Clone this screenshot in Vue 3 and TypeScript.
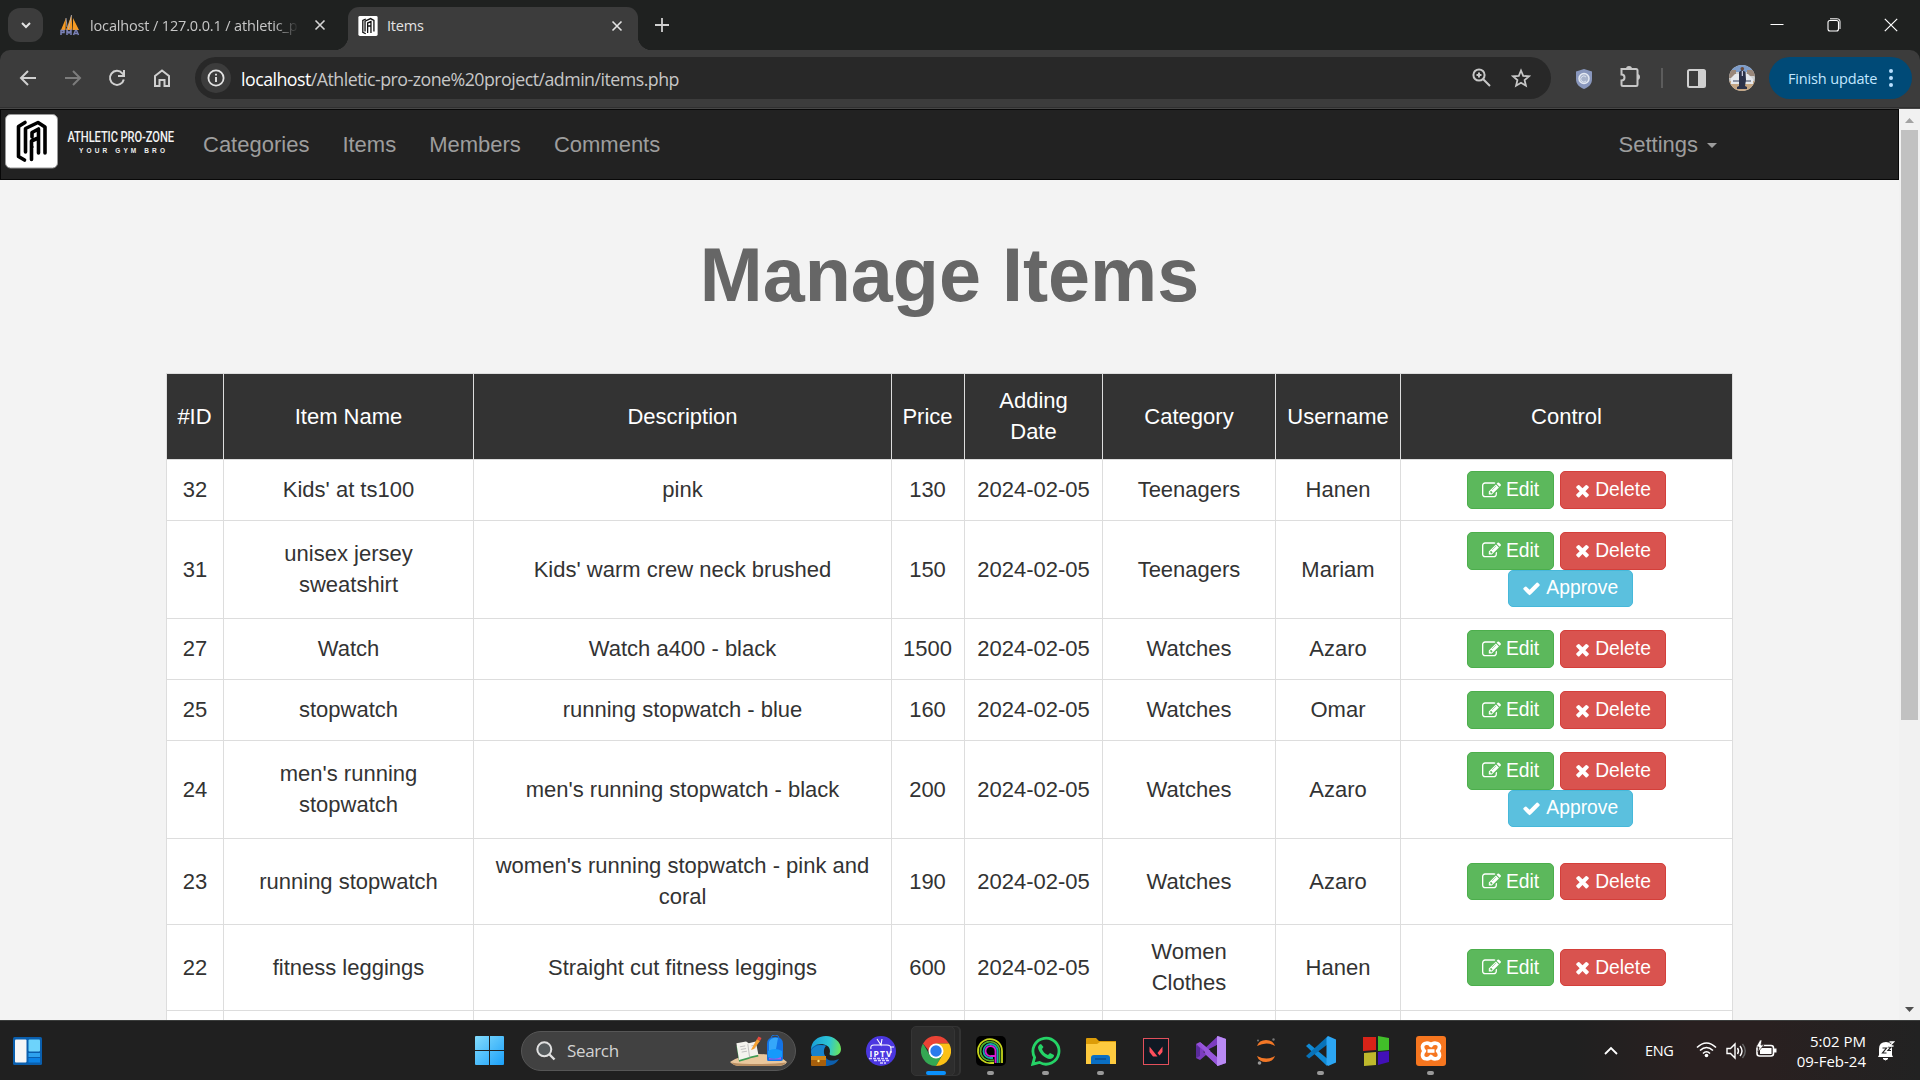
<script setup lang="ts">
interface Item {
  id: number
  name: string
  description: string
  price: number
  date: string
  category: string
  user: string
  height: number
  pending?: boolean
}

const navLinks: string[] = ['Categories', 'Items', 'Members', 'Comments']
const headings: string[] = ['#ID', 'Item Name', 'Description', 'Price', 'Adding Date', 'Category', 'Username', 'Control']
const columns: number[] = [57, 250, 418, 73, 138, 173, 125, 332]

const items: Item[] = [
  { id: 32, name: "Kids' at ts100", description: 'pink', price: 130, date: '2024-02-05', category: 'Teenagers', user: 'Hanen', height: 61 },
  { id: 31, name: 'unisex jersey sweatshirt', description: "Kids' warm crew neck brushed", price: 150, date: '2024-02-05', category: 'Teenagers', user: 'Mariam', height: 98, pending: true },
  { id: 27, name: 'Watch', description: 'Watch a400 - black', price: 1500, date: '2024-02-05', category: 'Watches', user: 'Azaro', height: 61 },
  { id: 25, name: 'stopwatch', description: 'running stopwatch - blue', price: 160, date: '2024-02-05', category: 'Watches', user: 'Omar', height: 61 },
  { id: 24, name: "men's running stopwatch", description: "men's running stopwatch - black", price: 200, date: '2024-02-05', category: 'Watches', user: 'Azaro', height: 98, pending: true },
  { id: 23, name: 'running stopwatch', description: "women's running stopwatch - pink and coral", price: 190, date: '2024-02-05', category: 'Watches', user: 'Azaro', height: 86 },
  { id: 22, name: 'fitness leggings', description: 'Straight cut fitness leggings', price: 600, date: '2024-02-05', category: 'Women Clothes', user: 'Hanen', height: 86 },
]
</script>

<template>
  <div class="screen">
    <header class="tabstrip">
      <div class="tab-search">
        <svg width="12" height="12" viewBox="0 0 12 12"><path d="M2 4l4 4 4-4" fill="none" stroke="#e3e3e3" stroke-width="2" /></svg>
      </div>
      <div class="tab">
        <svg class="pma" width="21" height="21" viewBox="0 0 21 21">
          <path d="M1 15L6 3l-.5 12zM6 15L11.500 0l1 15zM13 15V3l6 12z" fill="#f59a23" />
          <path d="M6 3l1 9M11.500 0l-3 14" stroke="#b9b9c8" stroke-width=".8" />
          <path d="M1 20v-4.500h3v2H1M7 20v-4.500l2 2.500 2-2.500V20M13.500 20l2-4.500h1l2 4.500m-4-1.500h3" fill="none" stroke="#7b82b8" stroke-width="1.500" />
        </svg>
        <span class="tab-title first">localhost / 127.0.0.1 / athletic_p</span>
        <svg class="x" width="12" height="12" viewBox="0 0 12 12"><path d="M1.500 1.500l9 9m0-9l-9 9" stroke="#d5d5d5" stroke-width="1.600" /></svg>
      </div>
      <div class="tab active">
        <svg class="fav" width="20" height="20" viewBox="0 0 52 54">
          <rect width="52" height="54" rx="4" fill="#fff" />
          <path d="M20 8L12 12v32l8 4M18 42V14l15-7 9 5v30M25 46V19l9-4v31M25 27h9" fill="none" stroke="#111" stroke-width="3.500" />
        </svg>
        <span class="tab-title">Items</span>
        <svg class="x" width="12" height="12" viewBox="0 0 12 12"><path d="M1.500 1.500l9 9m0-9l-9 9" stroke="#e3e3e3" stroke-width="1.600" /></svg>
      </div>
      <svg class="plus" width="14" height="14" viewBox="0 0 14 14"><path d="M7 0v14M0 7h14" stroke="#d0d0d0" stroke-width="1.800" /></svg>
      <div class="window-controls">
        <svg width="14" height="14" viewBox="0 0 14 14"><path d="M.5 6.500h13" stroke="#fff" stroke-width="1" /></svg>
        <svg width="14" height="14" viewBox="0 0 14 14"><rect x="1" y="2.500" width="10.500" height="10.500" rx="2" fill="none" stroke="#fff" stroke-width="1.100" /><path d="M3 .8h7.500a2.500 2.500 0 0 1 2.500 2.500V11" fill="none" stroke="#fff" stroke-width="1" /></svg>
        <svg width="14" height="14" viewBox="0 0 14 14"><path d="M.8.8l12.400 12.400m0-12.400L.8 13.200" stroke="#fff" stroke-width="1.200" /></svg>
      </div>
    </header>

    <div class="toolbar">
      <div class="nav-buttons">
        <svg width="18" height="18" viewBox="0 0 18 18"><path d="M17 9H2.500M9 2L2 9l7 7" fill="none" stroke="#d0d0d0" stroke-width="2" /></svg>
        <svg width="18" height="18" viewBox="0 0 18 18"><path d="M1 9h14.500M9 2l7 7-7 7" fill="none" stroke="#7c7c7c" stroke-width="2" /></svg>
        <svg width="18" height="18" viewBox="0 0 18 18"><path d="M15.800 10.500a7 7 0 1 1-1.500-6.200L16 6" fill="none" stroke="#d0d0d0" stroke-width="2" /><path d="M16 1v6h-6" fill="none" stroke="#d0d0d0" stroke-width="2" /></svg>
        <svg width="18" height="18" viewBox="0 0 18 18"><path d="M2 7l7-5.500L16 7v10h-4.500v-6h-5v6H2z" fill="none" stroke="#d0d0d0" stroke-width="2" /></svg>
      </div>
      <div class="omnibox">
        <div class="site-info">
          <svg width="18" height="18" viewBox="0 0 18 18"><circle cx="9" cy="9" r="7.600" fill="none" stroke="#e3e3e3" stroke-width="1.800" /><path d="M9 8v5M9 4.700v1.900" stroke="#e3e3e3" stroke-width="1.900" /></svg>
        </div>
        <span class="url"><b>localhost</b>/Athletic-pro-zone%20project/admin/items.php</span>
        <div class="omni-icons">
          <svg width="19" height="19" viewBox="0 0 19 19"><circle cx="7" cy="7" r="5.600" fill="none" stroke="#c7c7c7" stroke-width="2" /><path d="M11 11l7 7M7 4.500v5M4.500 7h5" stroke="#c7c7c7" stroke-width="2" /></svg>
          <svg width="20" height="20" viewBox="0 0 20 20"><path d="M10 2.500l2.200 5.300 5.800.5-4.400 3.800 1.300 5.600L10 14.700l-4.900 3 1.300-5.600L2 8.300l5.800-.5z" fill="none" stroke="#c7c7c7" stroke-width="1.800" /></svg>
        </div>
      </div>
      <svg class="shield" width="16" height="20" viewBox="0 0 16 20"><path d="M8 0l8 2.500V10c0 5-3 8-8 10-5-2-8-5-8-10V2.500z" fill="#8997bd" /><circle cx="8" cy="9.500" r="5" fill="#a8b3cb" stroke="#e4e9f2" stroke-width="1.500" /><path d="M10 8a3 3 0 1 0 0 4" stroke="#d9e1f0" fill="none" /></svg>
      <svg class="puzzle" width="22" height="22" viewBox="0 0 22 22"><path d="M2.500 4h14.500q1.500 0 1.500 1.500v14q0 1.500-1.500 1.500H4q-1.500 0-1.500-1.500v-4c4 0 4-6 0-6z" fill="none" stroke="#c7c7c7" stroke-width="2" /><path d="M7 4a3 3 0 0 1 6 0M18 9a3 3 0 0 1 0 6" fill="#c7c7c7" /></svg>
      <i class="sep"></i>
      <svg class="side" width="19" height="19" viewBox="0 0 19 19"><rect x="1" y="1" width="17" height="17" rx="1.500" fill="none" stroke="#d0d0d0" stroke-width="2" /><path d="M11 1h7v17h-7z" fill="#d0d0d0" /></svg>
      <svg class="avatar" width="26" height="26" viewBox="0 0 26 26">
        <clipPath id="av"><circle cx="13" cy="13" r="13" /></clipPath>
        <g clip-path="url(#av)"><path d="M0 0h26v26H0z" fill="#cfd0d0" /><path d="M0 0h26v7H0z" fill="#7d9cc9" /><path d="M0 5h7v8H0zM18 5h8v6h-8z" fill="#99877a" /><path d="M0 16h26v10H0z" fill="#c4a583" /><path d="M2 13l4-4h13l5 5v5H2z" fill="#e5e8ed" /><path d="M4 15h18v2H4z" fill="#8d93a3" /><path d="M10 7l3-2 3.500 2 .5 8-1 6 2 1v2H8v-2l2-1z" fill="#2b3148" /><circle cx="13.300" cy="3.800" r="1.800" fill="#6d4a3a" /><path d="M12.800 6h1v5h-1z" fill="#eef" /></g>
      </svg>
      <div class="update">Finish update<svg width="4" height="18" viewBox="0 0 4 18"><g fill="#b9e0ff"><circle cx="2" cy="2" r="2" /><circle cx="2" cy="9" r="2" /><circle cx="2" cy="16" r="2" /></g></svg></div>
    </div>

    <div class="viewport">
      <div class="page">
        <nav class="navbar">
          <svg class="brand" width="180" height="58" viewBox="0 0 180 58">
            <rect x="5.500" y=".5" width="52" height="53.500" rx="5" fill="#fff" stroke="#999" />
            <g fill="none" stroke="#000" stroke-width="3.600" stroke-linejoin="round" stroke-linecap="round">
              <path d="M25 8.500l-6.500 4v30l6 3.500" />
              <path d="M25.500 38V14.500L38 8.500l7 4.500v26" />
              <path d="M32 23v-4.500l6.500-3.500v24M38 24l-6.500 3v18.500M32 33h0" />
            </g>
            <g transform="translate(67.500 28) scale(.72 1)"><text x="0" y="0" textLength="148" lengthAdjust="spacing" class="brand-name">ATHLETIC PRO-ZONE</text></g>
            <text x="79" y="38.500" textLength="86" lengthAdjust="spacing" class="brand-tag">YOUR GYM BRO</text>
          </svg>
          <ul class="links">
            <li v-for="link in navLinks" :key="link">{{ link }}</li>
          </ul>
          <div class="settings">Settings<i class="caret"></i></div>
        </nav>

        <h1>Manage Items</h1>

        <table class="items">
          <colgroup><col v-for="(w, i) in columns" :key="i" :style="{ width: w + 'px' }" /></colgroup>
          <tbody>
            <tr class="head">
              <td v-for="h in headings" :key="h" :class="{ tight: h === '#ID' || h === 'Price' }">{{ h }}</td>
            </tr>
            <tr v-for="item in items" :key="item.id" :style="{ height: item.height + 'px' }">
              <td>{{ item.id }}</td>
              <td class="name">{{ item.name }}</td>
              <td>{{ item.description }}</td>
              <td class="tight">{{ item.price }}</td>
              <td>{{ item.date }}</td>
              <td class="cat">{{ item.category }}</td>
              <td>{{ item.user }}</td>
              <td class="control">
                <div class="actions">
                  <a class="btn edit"><svg width="19" height="19" viewBox="0 0 1792 1792"><path fill="#fff" d="M888 1184l116-116-152-152-116 116v56h96v96h56zm440-720q-16-16-33 1l-350 350q-17 17-1 33t33-1l350-350q17-17 1-33zm80 594v190q0 119-84.500 203.500t-203.500 84.500h-832q-119 0-203.500-84.500t-84.500-203.500v-832q0-119 84.500-203.500t203.500-84.500h832q63 0 117 25 15 7 18 23 3 17-9 29l-49 49q-14 14-32 8-23-6-45-6h-832q-66 0-113 47t-47 113v832q0 66 47 113t113 47h832q66 0 113-47t47-113v-126q0-13 9-22l64-64q15-15 35-7t20 29zm-96-738l288 288-672 672h-288v-288zm444 132l-92 92-288-288 92-92q28-28 68-28t68 28l152 152q28 28 28 68t-28 68z" /></svg>Edit</a>
                  <a class="btn delete"><svg width="15" height="19" viewBox="192 0 1408 1792"><path fill="#fff" d="M1490 1322q0 40-28 68l-136 136q-28 28-68 28t-68-28l-294-294-294 294q-28 28-68 28t-68-28l-136-136q-28-28-28-68t28-68l294-294-294-294q-28-28-28-68t28-68l136-136q28-28 68-28t68 28l294 294 294-294q28-28 68-28t68 28l136 136q28 28 28 68t-28 68l-294 294 294 294q28 28 28 68z" /></svg>Delete</a>
                </div>
                <a v-if="item.pending" class="btn approve"><svg width="19" height="19" viewBox="0 0 1792 1792"><path fill="#fff" d="M1671 566q0 40-28 68l-724 724-136 136q-28 28-68 28t-68-28l-136-136-362-362q-28-28-28-68t28-68l136-136q28-28 68-28t68 28l294 295 656-657q28-28 68-28t68 28l136 136q28 28 28 68z" /></svg>Approve</a>
              </td>
            </tr>
            <tr class="rest"><td v-for="h in headings" :key="h"></td></tr>
          </tbody>
        </table>
      </div>
      <div class="scrollbar">
        <svg width="9" height="5" viewBox="0 0 9 5"><path d="M0 5l4.500-5L9 5z" fill="#a3a3a3" /></svg>
        <i class="thumb"></i>
        <svg class="down" width="9" height="5" viewBox="0 0 9 5"><path d="M0 0l4.500 5L9 0z" fill="#505050" /></svg>
      </div>
    </div>

    <footer class="taskbar">
      <svg class="widgets" width="29" height="28" viewBox="0 0 29 28"><rect width="29" height="28" rx="1.500" fill="#0a5fae" /><rect x="2" y="2.500" width="11.500" height="23" rx="1" fill="#f6f6f6" /><rect x="15.500" y="2.500" width="11.500" height="12" rx="1" fill="#6dd3fb" /><rect x="15.500" y="16" width="11.500" height="4" fill="#2ea2ee" /><rect x="15.500" y="21" width="11.500" height="4.500" fill="#0c83e6" /></svg>
      <svg class="start" width="29" height="29" viewBox="0 0 29 29">
        <linearGradient id="wg" x1="0" y1="0" x2="1" y2="1" gradientUnits="objectBoundingBox"><stop offset="0" stop-color="#83dcfd" /><stop offset="1" stop-color="#1ba0f9" /></linearGradient>
        <path d="M0 1q0-1 1-1h13v14H0zM15 0h13q1 0 1 1v13H15zM0 15h14v14H1q-1 0-1-1zM15 15h14v13q0 1-1 1H15z" fill="url(#wg)" />
      </svg>
      <div class="search">
        <svg width="20" height="20" viewBox="0 0 20 20"><circle cx="8.300" cy="8.300" r="7" fill="#555a5c" stroke="#e0e0e0" stroke-width="2" /><path d="M13.500 13.500l5 5" stroke="#e0e0e0" stroke-width="2.400" /></svg>
        <span>Search</span>
        <svg class="art" width="58" height="32" viewBox="0 0 58 32">
          <path d="M0 27q10-7 28-8 20 0 29 8-2 4-10 4H10q-6 0-10-4z" fill="#e9c79d" /><path d="M1 27.500q10 1.500 27 1.500t28-1.500q-2 3.500-10 3.500H10q-6 0-9-3.500z" fill="#b98e62" />
          <g transform="translate(2 3) scale(.88)"><path d="M5 9l11-3 3 2 8-2 3 15-9 2-2 1-11 3z" fill="#3f9c52" /><path d="M5 6l11-2 3 2 8-2 3 15-9 2-2 1-11 3z" fill="#f4f3ee" /><path d="M18 7l2 15M9 10l6-1m-5 4l6-1m-5 4l6-1M22 9l4-1m-3 4l4-1" stroke="#b8b8b8" fill="none" /></g>
          <path d="M22 13l5-9 3 2-6 8-3 1z" fill="#f5a031" /><path d="M27 4l1.500-2.500 3 1.500-1.500 3z" fill="#e8483e" />
          <path d="M37 9q0-7 8-7t8 7v15q0 2-2 2H38q-1 0-1-2z" fill="#1473e6" /><path d="M39 7q2-5 9-4l-2 11-7 3z" fill="#35a7fa" /><path d="M41 3q0-3 4-3t4 3" fill="none" stroke="#1773dd" /><path d="M38 16q7-4 14 0v6q-7 4-14 0z" fill="#159afb" /><path d="M39 23q7 2 12-1v2.500H39z" fill="#a85bea" />
        </svg>
      </div>
      <div class="apps">
        <div class="app"><svg viewBox="0 0 30 30"><linearGradient id="eg" x1="0" y1=".3" x2="1" y2=".4"><stop offset="0" stop-color="#199fd8" /><stop offset=".6" stop-color="#2dc5d5" /><stop offset="1" stop-color="#69e45d" /></linearGradient><path d="M15 30A15 15 0 0 1 0 15C0 7 7 9 15 9c-3 3-4 9 1 14 4 3 9 1 12 0-3 5-8 7-13 7z" fill="#0d5fad" /><path d="M0 14C0 5 7 0 15 0s15 6 15 13c0 6-6 8-11 6-1-1 0-2 0-4 0-5-5-7-9-7-5 0-9 3-10 6z" fill="url(#eg)" /><path d="M10 9c-6 0-10 4-10 7l1 4h13c-2-4-1-8 1-10z" fill="#1683cd" /><rect y="20" width="15" height="10" rx="1" fill="#a75f0c" /><path d="M0 20h15v4H0z" fill="#d18617" /><circle cx="7.500" cy="25" r="1.200" fill="#ffe37a" /></svg></div>
        <div class="app"><svg viewBox="0 0 30 30"><circle cx="15" cy="15" r="15" fill="#4b37e0" /><path d="M11 3l4 6 1-6M5 13q-1-4 3-4h13q4 0 4 4v4M25 11h3" fill="none" stroke="#fff" stroke-width="1.100" /><text x="3.500" y="21" class="iptv" textLength="22">IPTV</text><path d="M3 22.500h20M8 24.500h15M14 27h6" stroke="#d6d0ff" stroke-width="1.400" stroke-dasharray="3 1" /></svg></div>
        <div class="app current"><svg viewBox="0 0 30 30"><path d="M2 7.500A15 15 0 0 0 15 30l6.500-11.200L8.500 18.700z" fill="#34a853" /><path d="M2 7.500A15 15 0 0 1 28 7.500H15L8 15z" fill="#ea4335" /><path d="M15 7.500h13A15 15 0 0 1 15 30l7-12z" fill="#fbc116" /><circle cx="15" cy="15" r="7.500" fill="#fff" /><circle cx="15" cy="15" r="5.700" fill="#2a7bed" /></svg><i></i></div>
        <div class="app open"><svg viewBox="0 0 30 30"><rect width="30" height="30" rx="5" fill="#000" /><g fill="none" stroke-width="1.800"><path d="M26 27V15A12 12 0 1 0 15 27h3" stroke="#c5d51b" /><path d="M23.500 27V15A9.500 9.500 0 1 0 15 24.500h3" stroke="#50ae27" /><path d="M21.500 27V15A7 7 0 1 0 15 22h2" stroke="#14a7a8" /><path d="M19.500 27V15A5 5 0 1 0 15 20h4" stroke="#d719d3" /></g></svg><i></i></div>
        <div class="app open"><svg viewBox="0 0 30 30"><path d="M1.800 28.200l1.800-6.800A13 13 0 1 1 8.500 26.400z" fill="none" stroke="#25d366" stroke-width="2.800" /><path d="M10 8q-2 0-3 3c0 5 7 12 12 12 3-.5 4-2 4-4l-4-2-2 2c-3-1-5-3-6-6l1.500-2z" fill="#25d366" /></svg><i></i></div>
        <div class="app open"><svg viewBox="0 0 30 30"><path d="M0 3q0-1 1-1h9l3 3h17v5H0z" fill="#dc9c08" /><path d="M0 8h11l3-2h15q1 0 1 1v21H0z" fill="#fdca3f" /><path d="M5 28v-6q0-3 3-3h13q3 0 3 3v6z" fill="#0a6fc4" /><path d="M9 23h11" stroke="#083e78" /></svg><i></i></div>
        <div class="app"><svg viewBox="0 0 30 30"><rect x="2.500" y="2.500" width="25" height="26" fill="#101923" stroke="#e2505b" /><path d="M8.500 10.500l8 10h-4.500l-3.500-4.500zM21.500 10.500v5.500l-3 3.500-2-2.500z" fill="#ff4f5c" /></svg></div>
        <div class="app"><svg viewBox="0 0 30 30"><path d="M0 8l4-2 18 15v9z" fill="#9550d8" /><path d="M0 8v14l4 2L22 9V0L7 14z" fill="#7c3cc0" /><path d="M0 9l4 3v8l-4 2z" fill="#592b9b" /><path d="M7 16L21 9v12z" fill="#202020" /><path d="M4 6l18 15V0l8 3v24l-8 3L10 19z" fill="#9857dc" /><path d="M21 0l9 3v24l-9 3z" fill="#b98af4" /><path d="M21 9v12l-7-6z" fill="#202020" /></svg></div>
        <div class="app"><svg viewBox="0 0 30 30"><path d="M6 10q2-6 9-6t9 6q-8-5-18 0zM6 20q2 6 9 6t9-6q-8 5-18 0z" fill="#f37726" /><circle cx="22.500" cy="3.500" r="1.200" fill="#777" /><circle cx="7" cy="4.500" r="1" fill="#777" /><circle cx="8.500" cy="27" r="1.800" fill="#999" /></svg></div>
        <div class="app open"><svg viewBox="0 0 30 30"><path d="M0 10l3-2.500 18 15V30z" fill="#118bd6" /><path d="M0 20l3 2.500L22 8V0z" fill="#0872b8" /><path d="M22 0l8 3.500v23L22 30l-1.500-1.500V2z" fill="#2ca6f3" /></svg><i></i></div>
        <div class="app"><svg viewBox="0 0 30 30"><path d="M2 1l13 0v13L2 15z" fill="#d82318" /><path d="M17 0l11 2v12l-11 1z" fill="#41be29" /><path d="M3 17l12-1v13L3 30z" fill="#bfb92c" /><path d="M17 16l11-1v11l-11 3z" fill="#4210b8" /></svg></div>
        <div class="app open"><svg viewBox="0 0 30 30"><rect width="30" height="30" rx="3" fill="#f6761f" /><path d="M15 9.500C13 6 7 6.500 6.500 10.500c0 2 .5 3.500 2 4.500-1.500 1-2 2.500-2 4.500C7 23.500 13 24 15 20.500c2 3.500 8 3 8.500-1 0-2-.5-3.500-2-4.500 1.500-1 2-2.500 2-4.500C23 6.500 17 6 15 9.500z" fill="none" stroke="#fff" stroke-width="3.600" stroke-linejoin="round" /><path d="M11.500 15h7" stroke="#fff" stroke-width="3.600" /></svg><i></i></div>
      </div>
      <div class="tray">
        <svg width="14" height="9" viewBox="0 0 14 9"><path d="M1 8l6-6 6 6" fill="none" stroke="#fff" stroke-width="1.800" /></svg>
        <span class="lang">ENG</span>
        <svg class="wifi" width="21" height="17" viewBox="0 0 21 17"><path d="M1 6.500q9.500-9 19 0M4 9.500q6.500-6 13 0M7 12.500q3.500-3.500 7 0" fill="none" stroke="#fff" stroke-width="1.600" /><circle cx="10.500" cy="14.500" r="1.800" fill="#fff" /></svg>
        <svg class="vol" width="21" height="18" viewBox="0 0 21 18"><path d="M1 6.500h3.500L9 2v14l-4.500-4.500H1z" fill="none" stroke="#fff" stroke-width="1.400" /><path d="M11.500 6q2 3 0 6M14 4q4 5 0 10" fill="none" stroke="#fff" stroke-width="1.400" /><path d="M16.500 2q5.500 7 0 14" fill="none" stroke="#666" stroke-width="1.400" /></svg>
        <svg class="bat" width="21" height="18" viewBox="0 0 21 18"><rect x="1" y="5.500" width="16.500" height="10.500" rx="2.500" fill="none" stroke="#fff" stroke-width="1.600" /><rect x="4" y="8" width="11.500" height="6" fill="#fff" /><path d="M18 8.500h2.500v4H18z" fill="#fff" /><path d="M4 0L0 7h3L2 12l6-7H5l1-5z" fill="#fff" stroke="#292020" stroke-width=".7" /></svg>
        <div class="clock"><span>5:02 PM</span><span>09-Feb-24</span></div>
        <svg class="bell" width="18" height="20" viewBox="0 0 18 20"><path d="M2 14V8q0-7 7-7 6 0 6 7v6l1 2H1z" fill="#fff" /><path d="M6 17.500h5q-2.500 3-5 0z" fill="#fff" stroke="#fff" /><path d="M5.500 7h4l-4 5h4M11 6h3l-3 3.500h3" fill="none" stroke="#222" stroke-width="1.200" /><path d="M12.500 1h4l-4 4h4" fill="none" stroke="#fff" stroke-width="1.300" /></svg>
      </div>
    </footer>
  </div>
</template>

<style>
body { margin: 0; overflow: hidden; }
</style>

<style scoped>
.screen { width: 1920px; height: 1080px; display: flex; flex-direction: column; overflow: hidden; background: #1f2120; font-family: "Open Sans", "Noto Sans", sans-serif; }
svg { display: block; flex: none; }
.tabstrip { height: 50px; flex: none; display: flex; color: #e3e3e3; }
.tab-search { width: 35px; height: 34px; margin: 8px 0 0 8px; border-radius: 12px; background: #3c3c3c; display: flex; align-items: center; justify-content: center; }
.tab { display: flex; align-items: center; height: 50px; width: 305px; box-sizing: border-box; padding-left: 16px; }
.tab-title { font-size: 14.500px; letter-spacing: -.2px; margin-left: 9px; line-height: 20px; white-space: nowrap; flex: none; }
.tab-title.first { width: 209px; color: #c7c7c7; letter-spacing: -.15px; mask-image: linear-gradient(90deg, #000 88%, transparent); padding-top: 1px; }
.pma { margin-left: 1px; }
.tab .x { margin-left: 15px; }
.tab.active { position: relative; width: 290px; height: 43px; margin-top: 7px; padding: 0 15px 5px 10px; background: #3c3c3c; border-radius: 11px 11px 0 0; }
.tab.active::before, .tab.active::after { content: ""; position: absolute; bottom: 0; width: 14px; height: 14px; }
.tab.active::before { left: -14px; background: radial-gradient(circle at 0 0, transparent 14px, #3c3c3c 14.500px); }
.tab.active::after { right: -14px; background: radial-gradient(circle at 100% 0, transparent 14px, #3c3c3c 14.500px); }
.tab.active .x { margin-left: auto; }
.plus { margin: 18px 0 0 17px; }
.window-controls { margin: 18px 22px 0 auto; display: flex; gap: 43px; }
.toolbar { height: 56px; flex: none; display: flex; align-items: center; background: #3c3c3c; border-radius: 10px 10px 0 0; border-bottom: 1px solid #303030; padding-bottom: 1px; }
.nav-buttons { display: flex; gap: 26.500px; margin-left: 19px; width: 176px; }
.omnibox { width: 1356px; height: 42px; border-radius: 21px; background: #282828; display: flex; align-items: center; flex: none; }
.site-info { width: 30px; height: 30px; border-radius: 50%; background: #3c3c3c; display: flex; align-items: center; justify-content: center; margin-left: 6px; }
.url { margin-left: 10px; padding-top: 2px; font-size: 17.800px; color: #c7c7c7; letter-spacing: -.52px; white-space: nowrap; line-height: 26px; }
.url b { font-weight: 400; color: #fff; }
.omni-icons { margin-left: auto; display: flex; gap: 20px; margin-right: 20px; }
.shield { margin-left: 25px; margin-top: 1px; }
.puzzle { margin-left: 27px; margin-top: -4px; }
.sep { width: 2px; height: 20px; background: #5c5c5c; margin-left: 20px; }
.side { margin-left: 24px; }
.avatar { margin-left: 23px; }
.update { width: 143px; height: 42px; margin-left: 14px; border-radius: 21px; background: #004a77; color: #c2e7ff; font-size: 14.500px; letter-spacing: -.15px; display: flex; align-items: center; box-sizing: border-box; padding: 0 19px; justify-content: space-between; white-space: nowrap; }
.viewport { height: 911px; flex: none; display: flex; border-top: 1px solid #474747; overflow: hidden; }
.page { width: 1899px; background: #f3f3f3; font: 22px/31px "Liberation Sans", Arial, sans-serif; color: #333; overflow: hidden; }
.navbar { height: 71px; box-sizing: border-box; background: #222; border: 1px solid #080808; display: flex; align-items: center; color: #9d9d9d; }
.brand { margin-left: -1px; margin-top: -3px; }
.brand-name { font: 500 15.500px "Roboto", sans-serif; fill: #f2f2f2; }
.brand-tag { font: 700 6.500px "Liberation Sans", sans-serif; fill: #eee; }
.links { list-style: none; margin: 0 0 0 23px; padding: 0; display: flex; gap: 33px; }
.settings { margin-left: auto; margin-right: 181px; display: flex; align-items: center; }
.caret { border: 5px solid transparent; border-top-color: #9d9d9d; border-bottom: 0; margin: 2px 0 0 9px; }
h1 { margin: 0; padding-top: 54px; height: 139px; text-align: center; font-size: 75.500px; line-height: 83px; font-weight: 700; color: #666; }
.items { width: 1567px; margin-left: 166px; border-spacing: 0; table-layout: fixed; text-align: center; border-left: 1px solid #ddd; border-top: 1px solid #ddd; background: #fff; }
td { box-sizing: border-box; padding: 0 11px 1px; border-right: 1px solid #ddd; border-bottom: 1px solid #ddd; vertical-align: middle; }
td.tight { padding: 0 1px 1px 0; }
td.name { padding: 0 30px 1px; }
td.cat { padding: 0 20px 1px; }
.head { height: 86px; background: #333; color: #fff; }
.rest { height: 60px; }
td.control { padding: 0; }
.actions { display: flex; justify-content: center; gap: 6px; }
.btn { height: 37.500px; box-sizing: border-box; border-radius: 5px; border: 1px solid; color: #fff; font-size: 19.300px; display: flex; align-items: center; justify-content: center; gap: 5px; line-height: 30px; }
.edit { width: 87px; background: #5cb85c; border-color: #4cae4c; }
.delete { width: 106px; background: #d9534f; border-color: #d43f3a; }
.approve { width: 124.500px; margin: 0 0 0 107px; background: #5bc0de; border-color: #46b8da; }
.scrollbar { width: 21px; background: #f1f1f1; display: flex; flex-direction: column; align-items: center; padding-top: 9px; box-sizing: border-box; }
.thumb { width: 17px; height: 590px; background: #c1c1c1; margin-top: 7px; }
.down { margin-top: auto; margin-bottom: 8px; }
.taskbar { height: 60px; flex: none; box-sizing: border-box; border-top: 1px solid #3b3d3c; background: linear-gradient(90deg, #202020 82%, #292020 88%, #292020 92%, #222 100%); display: flex; align-items: center; color: #fff; }
.widgets { margin-left: 13px; }
.start { margin-left: 433px; }
.search { width: 275px; height: 40px; box-sizing: border-box; margin-left: 17px; border: 1px solid #565656; border-radius: 20px; background: #414141; display: flex; align-items: center; padding: 0 7px 0 14px; font-size: 17px; letter-spacing: -.35px; color: #d3d3d3; }
.search span { margin-left: 11px; }
.search .art { margin-left: auto; }
.apps { display: flex; margin-left: 2px; }
.app { position: relative; width: 55px; height: 50px; display: flex; align-items: center; justify-content: center; }
.app > svg { position: relative; width: 30px; height: 30px; }
.app i { position: absolute; left: 24px; bottom: 1px; width: 7px; height: 4px; border-radius: 2px; background: #9a9a9a; }
.app.current i { left: 18px; width: 20px; background: #0a91fd; }
.app.current::before { content: ""; position: absolute; left: 3px; width: 44px; height: 50px; box-sizing: border-box; border: 1px solid #353535; border-radius: 5px; background: #2d2d2d; box-shadow: 5px 0 0 -1px #272727, 6px 0 0 0 #333; }
.iptv { font: 700 8.500px "Open Sans", sans-serif; fill: #fff; }
.tray { margin-left: auto; margin-right: 25px; display: flex; align-items: center; }
.lang { margin-left: 27px; font-size: 14.500px; width: 30px; letter-spacing: -.4px; }
.wifi { margin-left: 21px; margin-top: -2px; }
.vol { margin-left: 9px; }
.bat { margin-left: 9px; margin-top: -4px; }
.clock { width: 89px; display: flex; flex-direction: column; align-items: flex-end; font-size: 15px; line-height: 20px; letter-spacing: 0; white-space: nowrap; }
.bell { margin-left: 11px; }
</style>
